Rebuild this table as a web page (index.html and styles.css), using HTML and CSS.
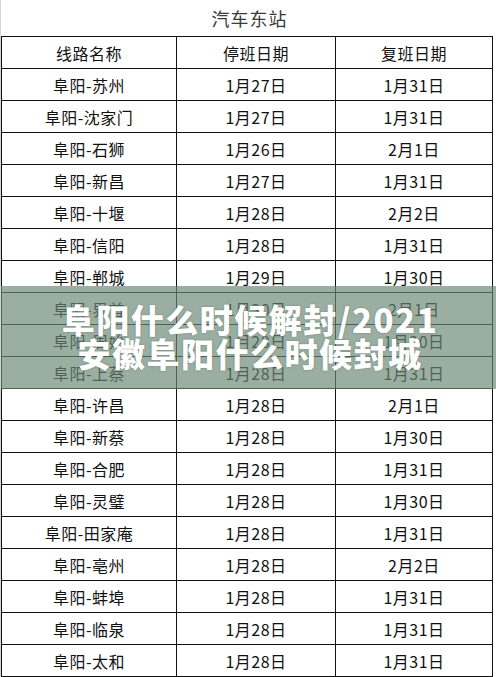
FILE: index.html
```html
<!DOCTYPE html>
<html lang="zh">
<head>
<meta charset="utf-8">
<link rel="stylesheet" href="styles.css">
</head>
<body>
<div class="page">
  <div class="sheet">
    <div class="title">汽车东站</div>
    <div class="grid">
      <div class="cell">线路名称</div><div class="cell">停班日期</div><div class="cell">复班日期</div>
      <div class="cell">阜阳-苏州</div><div class="cell">1月27日</div><div class="cell">1月31日</div>
      <div class="cell">阜阳-沈家门</div><div class="cell">1月27日</div><div class="cell">1月31日</div>
      <div class="cell">阜阳-石狮</div><div class="cell">1月26日</div><div class="cell">2月1日</div>
      <div class="cell">阜阳-新昌</div><div class="cell">1月27日</div><div class="cell">1月31日</div>
      <div class="cell">阜阳-十堰</div><div class="cell">1月28日</div><div class="cell">2月2日</div>
      <div class="cell">阜阳-信阳</div><div class="cell">1月28日</div><div class="cell">1月31日</div>
      <div class="cell">阜阳-郸城</div><div class="cell">1月29日</div><div class="cell">1月30日</div>
      <div class="cell">阜阳-界首</div><div class="cell">1月30日</div><div class="cell">2月1日</div>
      <div class="cell">阜阳-周始</div><div class="cell">1月28日</div><div class="cell">1月30日</div>
      <div class="cell">阜阳-上蔡</div><div class="cell">1月28日</div><div class="cell">1月31日</div>
      <div class="cell">阜阳-许昌</div><div class="cell">1月28日</div><div class="cell">2月1日</div>
      <div class="cell">阜阳-新蔡</div><div class="cell">1月28日</div><div class="cell">1月30日</div>
      <div class="cell">阜阳-合肥</div><div class="cell">1月28日</div><div class="cell">1月31日</div>
      <div class="cell">阜阳-灵璧</div><div class="cell">1月28日</div><div class="cell">1月30日</div>
      <div class="cell">阜阳-田家庵</div><div class="cell">1月28日</div><div class="cell">1月31日</div>
      <div class="cell">阜阳-亳州</div><div class="cell">1月28日</div><div class="cell">2月2日</div>
      <div class="cell">阜阳-蚌埠</div><div class="cell">1月28日</div><div class="cell">1月31日</div>
      <div class="cell">阜阳-临泉</div><div class="cell">1月28日</div><div class="cell">1月31日</div>
      <div class="cell">阜阳-太和</div><div class="cell">1月28日</div><div class="cell">1月31日</div>
    </div>
  </div>
  <div class="banner">
    <div class="banner-line">阜阳什么时候解封/2021</div>
    <div class="banner-line">安徽阜阳什么时候封城</div>
  </div>
</div>
</body>
</html>
```

FILE: styles.css
```css
html, body {
  margin: 0;
  padding: 0;
  background: #ffffff;
}
.page {
  position: relative;
  width: 496px;
  height: 677px;
  overflow: hidden;
  background: #ffffff;
  border-left: 1px solid #d4d4d4;
  box-sizing: border-box;
}
.sheet {
  width: 493px;
}
.title {
  height: 36px;
  display: flex;
  align-items: center;
  justify-content: center;
  padding-left: 4px;
  font-family: "Noto Sans CJK SC", "Liberation Sans", sans-serif;
  font-size: 18px;
  color: #3a3a3a;
  letter-spacing: 1px;
}
.grid {
  display: grid;
  grid-template-columns: 175px 159px 157px;
  grid-auto-rows: 32px;
  border-top: 1px solid #111;
  border-left: 1px solid #111;
  width: 491px;
}
.cell {
  border-right: 1px solid #111;
  border-bottom: 1px solid #111;
  display: flex;
  align-items: center;
  justify-content: center;
  font-family: "Noto Sans CJK SC", "Liberation Sans", sans-serif;
  font-size: 16px;
  color: #111;
  line-height: 1;
  letter-spacing: 0.5px;
}
.banner {
  position: absolute;
  left: 0;
  top: 286px;
  width: 496px;
  height: 103px;
  background: rgba(108, 136, 118, 0.68);
  display: flex;
  flex-direction: column;
  align-items: center;
  justify-content: center;
  padding-left: 2px;
  padding-bottom: 4px;
  box-sizing: border-box;
}
.banner-line {
  font-family: "Noto Sans CJK SC", "Liberation Sans", sans-serif;
  font-weight: 900;
  font-size: 33px;
  line-height: 34px;
  color: #ffffff;
  letter-spacing: 1.5px;
  text-shadow: 0 0 2px rgba(60, 75, 65, 0.5);
}
```
